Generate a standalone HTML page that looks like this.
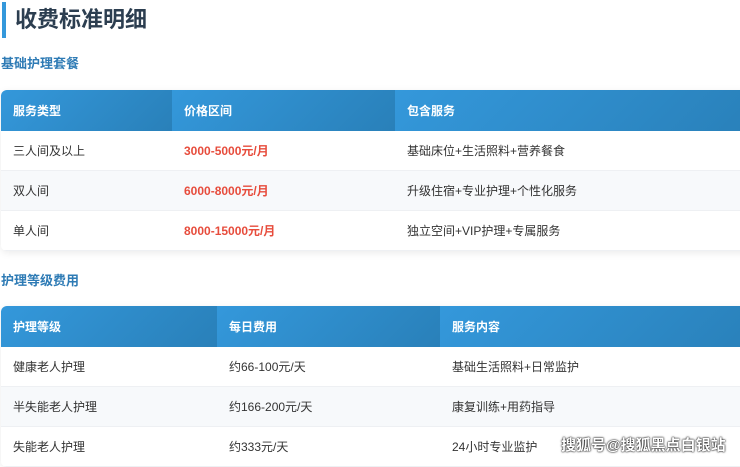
<!DOCTYPE html><html><head><meta charset="utf-8"><style>
body{margin:0;width:740px;height:463px;overflow:hidden;background:#fff;font-family:"Liberation Sans","Noto Sans CJK SC",sans-serif;position:relative}
.bar{position:absolute;left:2px;top:2px;width:4px;height:36px;background:#3498db}
h1{position:absolute;left:15px;top:4px;margin:0;font-size:22px;line-height:32px;color:#2c3e50;font-weight:bold}
.sub{position:absolute;left:1px;font-size:13px;font-weight:bold;color:#2e7bb5}
table{position:absolute;left:1px;width:760px;border-collapse:collapse;font-size:12px;color:#333;box-shadow:0 2px 8px rgba(0,0,0,.08);border-radius:6px 0 0 6px;overflow:hidden}
th{background:linear-gradient(135deg,#3498db,#2980b9);color:#fff;text-align:left;font-weight:bold;padding:0 0 0 12px;height:41px}
td{padding:0 0 0 12px;height:39px;border-bottom:1px solid #eef0f3;background:#fff}
tr:nth-child(odd) td{background:#f7f9fb}
.p{color:#e74c3c;font-weight:bold}
.wm{position:absolute;left:561px;top:434px;font-size:15px;color:#fff;font-weight:bold;text-shadow:0 0 2px #000,0 0 1px #000}
</style></head><body>
<div class="bar"></div><h1>收费标准明细</h1>
<div class="sub" style="top:53px">基础护理套餐</div>
<table style="top:90px"><tr><th style="width:159px">服务类型</th><th style="width:211px">价格区间</th><th>包含服务</th></tr>
<tr><td>三人间及以上</td><td class="p">3000-5000元/月</td><td>基础床位+生活照料+营养餐食</td></tr>
<tr><td>双人间</td><td class="p">6000-8000元/月</td><td>升级住宿+专业护理+个性化服务</td></tr>
<tr><td>单人间</td><td class="p">8000-15000元/月</td><td>独立空间+VIP护理+专属服务</td></tr></table>
<div class="sub" style="top:270px">护理等级费用</div>
<table style="top:306px"><tr><th style="width:204px">护理等级</th><th style="width:211px">每日费用</th><th>服务内容</th></tr>
<tr><td>健康老人护理</td><td>约66-100元/天</td><td>基础生活照料+日常监护</td></tr>
<tr><td>半失能老人护理</td><td>约166-200元/天</td><td>康复训练+用药指导</td></tr>
<tr><td>失能老人护理</td><td>约333元/天</td><td>24小时专业监护</td></tr></table>
<div class="wm">搜狐号@搜狐黑点白银站</div>
</body></html>
